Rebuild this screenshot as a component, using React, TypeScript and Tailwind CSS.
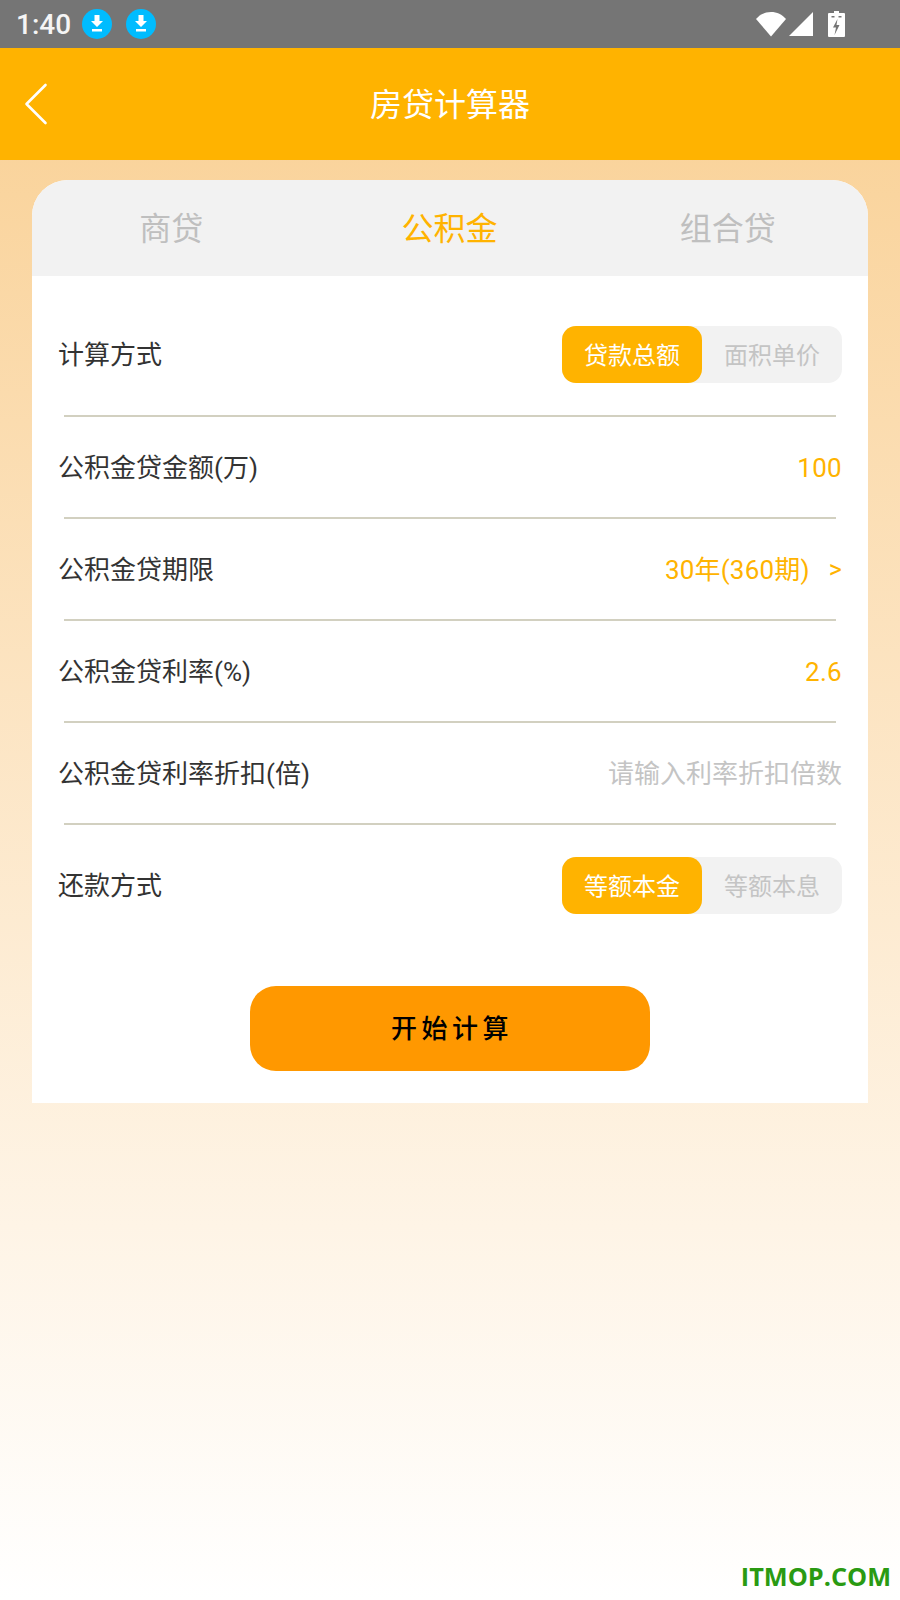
import React from "react";

const font = { fontFamily: 'Roboto, "Noto Sans CJK SC", sans-serif' };

function Seg({ a, b }: { a: string; b: string }) {
  return (
    <div className="flex h-[57px] w-[280px] rounded-[14px] bg-[#f2f2f2] text-[24px]">
      <div className="flex w-[140px] items-center justify-center rounded-[14px] bg-[#ffb300] pt-[2px] text-white">{a}</div>
      <div className="flex w-[140px] items-center justify-center pt-[2px] text-[#c4c4c4]">{b}</div>
    </div>
  );
}

function Line() {
  return <div className="mx-[32px] h-[2px] bg-[#d2d0c0]" />;
}

function Row({ label, children }: { label: string; children: React.ReactNode }) {
  return (
    <div className="flex h-[100px] items-center justify-between pl-[26px] pr-[26px] pt-[2px]">
      <span className="text-[26px] text-[#333333]">{label}</span>
      {children}
    </div>
  );
}

export default function App() {
  return (
    <div className="flex h-[1600px] w-[900px] flex-col overflow-hidden bg-gradient-to-b from-[#f9cf91] to-[#ffffff]" style={font}>
      <div className="flex h-[48px] items-center justify-between bg-[#757575] pl-[16px] pr-[55px]">
        <div className="flex items-center">
          <span className="pt-[2px] text-[28px] font-medium text-[#f5f5f5]">1:40</span>
          {[0, 1].map((i) => (
            <svg key={i} viewBox="0 0 30 30" className={i === 0 ? "ml-[11px] h-[30px] w-[30px]" : "ml-[14px] h-[30px] w-[30px]"}>
              <circle cx="15" cy="15" r="15" fill="#00bcff" />
              <path d="M12.5 6h5v6h3.5L15 18 9 12h3.5z" fill="#fff" />
              <rect x="10" y="20" width="10" height="2.5" fill="#fff" />
            </svg>
          ))}
        </div>
        <div className="flex items-center">
          <svg viewBox="0 0 30 26" className="h-[26px] w-[30px]">
            <path d="M0 8C4 3.500 9 1 15 1S26 3.500 30 8L15 25.500z" fill="#fff" />
          </svg>
          <svg viewBox="0 0 24 24" className="ml-[3px] h-[24px] w-[24px]">
            <path d="M24 0v24H0z" fill="#fff" />
          </svg>
          <svg viewBox="0 0 17 26" className="ml-[15px] h-[26px] w-[17px]">
            <path fillRule="evenodd" d="M6 0h5v2h5a1 1 0 0 1 1 1v22a1 1 0 0 1-1 1H1a1 1 0 0 1-1-1V3a1 1 0 0 1 1-1h5zM3.500 5v1.500h3V5zM10.500 5v1.500h3V5zM9.500 8 5 16.500h3L6.500 24l5-10H8.500z" fill="#fff" />
          </svg>
        </div>
      </div>

      <div className="relative flex h-[112px] items-center justify-center bg-[#ffb300]">
        <svg viewBox="0 0 24 42" className="absolute left-[24px] top-[35px] h-[42px] w-[24px]" fill="none">
          <path d="M21.500 2 2.500 21l19 19" stroke="#fff" strokeWidth="2.600" strokeLinecap="round" strokeLinejoin="round" />
        </svg>
        <span className="pt-[2px] text-[32px] text-white">房贷计算器</span>
      </div>

      <div className="mx-[32px] mt-[20px] rounded-t-[36px] bg-white">
        <div className="flex h-[96px] items-center rounded-t-[36px] bg-[#f2f2f2] pr-[1px] pt-[2px] text-[32px]">
          <div className="flex-1 text-center text-[#bfbfbf]">商贷</div>
          <div className="flex-1 text-center text-[#ffb300]">公积金</div>
          <div className="flex-1 text-center text-[#bfbfbf]">组合贷</div>
        </div>

        <div className="flex items-center justify-between pb-[32px] pl-[26px] pr-[26px] pt-[50px]">
          <span className="pt-[2px] text-[26px] text-[#333333]">计算方式</span>
          <Seg a="贷款总额" b="面积单价" />
        </div>
        <Line />
        <Row label="公积金贷金额(万)">
          <span className="text-[26px] tracking-[0.3px] text-[#ffb300]">100</span>
        </Row>
        <Line />
        <Row label="公积金贷期限">
          <span className="flex items-center text-[26px] tracking-[0.2px] text-[#ffb300]">
            30年(360期)
            <span className="ml-[19px] text-[25px]">&gt;</span>
          </span>
        </Row>
        <Line />
        <Row label="公积金贷利率(%)">
          <span className="text-[26px] tracking-[0.3px] text-[#ffb300]">2.6</span>
        </Row>
        <Line />
        <Row label="公积金贷利率折扣(倍)">
          <span className="text-[26px] text-[#c4c4c4]">请输入利率折扣倍数</span>
        </Row>
        <Line />
        <div className="flex items-center justify-between pl-[26px] pr-[26px] pt-[32px]">
          <span className="pt-[2px] text-[26px] text-[#333333]">还款方式</span>
          <Seg a="等额本金" b="等额本息" />
        </div>

        <div className="flex justify-center pb-[32px] pt-[72px]">
          <div className="flex h-[85px] w-[400px] items-center justify-center rounded-[26px] bg-[#ff9800] pl-[4px] pt-[2px] text-[26px] font-medium tracking-[4.500px] text-black">
            开始计算
          </div>
        </div>
      </div>

      <div className="mt-auto flex justify-end pb-[8px] pr-[9px]">
        <span className="text-[25.300px] font-bold leading-[32px] text-[#2a9a12]" style={{ fontFamily: '"Open Sans", sans-serif' }}>ITMOP.COM</span>
      </div>
    </div>
  );
}
